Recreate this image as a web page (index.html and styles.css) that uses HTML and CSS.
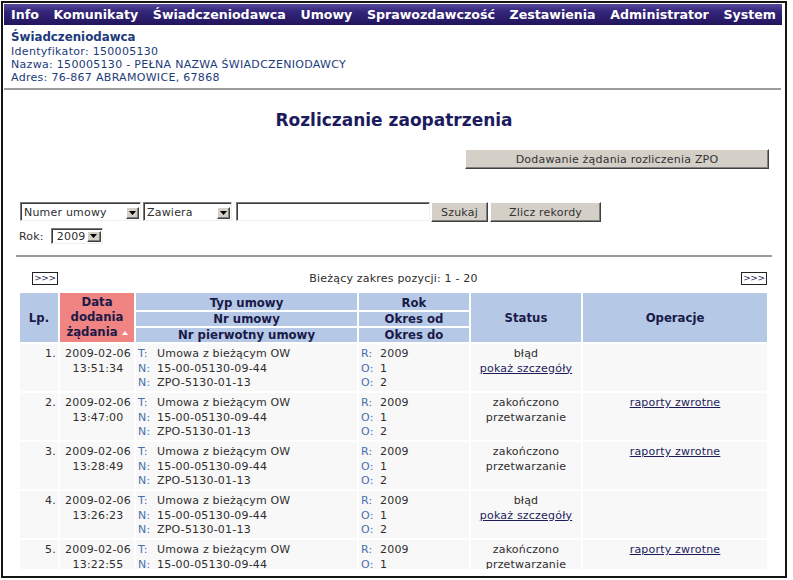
FILE: index.html
```html
<!DOCTYPE html>
<html lang="pl">
<head>
<meta charset="utf-8">
<title>Rozliczanie zaopatrzenia</title>
<link rel="stylesheet" href="styles.css">
</head>
<body>
<div class="frame">
  <div class="viewport">
    <nav class="menu">
      <span>Info</span>
      <span>Komunikaty</span>
      <span>Świadczeniodawca</span>
      <span>Umowy</span>
      <span>Sprawozdawczość</span>
      <span>Zestawienia</span>
      <span>Administrator</span>
      <span>System</span>
    </nav>
    <div class="provider">
      <div class="provider-title">Świadczeniodawca</div>
      <div>Identyfikator: 150005130</div>
      <div>Nazwa: 150005130 - PEŁNA NAZWA ŚWIADCZENIODAWCY</div>
      <div>Adres: 76-867 ABRAMOWICE, 67868</div>
    </div>
    <div class="rule"></div>
    <main class="content">
      <h1 class="title">Rozliczanie zaopatrzenia</h1>
      <div class="actions">
        <button class="btn btn-add">Dodawanie żądania rozliczenia ZPO</button>
      </div>
      <div class="search">
        <div class="select sel-field">
          <span class="sel-text">Numer umowy</span>
          <span class="sel-arrow"><svg width="7" height="4" viewBox="0 0 7 4"><path d="M0 0h7L3.5 4z" fill="#000"/></svg></span>
        </div>
        <div class="select sel-op">
          <span class="sel-text">Zawiera</span>
          <span class="sel-arrow"><svg width="7" height="4" viewBox="0 0 7 4"><path d="M0 0h7L3.5 4z" fill="#000"/></svg></span>
        </div>
        <input class="textbox" type="text" value="">
        <button class="btn btn-search">Szukaj</button>
        <button class="btn btn-count">Zlicz rekordy</button>
      </div>
      <div class="year">
        <span class="year-label">Rok:</span>
        <div class="select sel-year">
          <span class="sel-text">2009</span>
          <span class="sel-arrow"><svg width="7" height="4" viewBox="0 0 7 4"><path d="M0 0h7L3.5 4z" fill="#000"/></svg></span>
        </div>
      </div>
      <div class="rule2"></div>
      <div class="pager">
        <span class="next next-left">&gt;&gt;&gt;</span>
        <span class="range">Bieżący zakres pozycji: 1 - 20</span>
        <span class="next next-right">&gt;&gt;&gt;</span>
      </div>
      <table class="grid">
        <colgroup>
          <col class="c-lp"><col class="c-date"><col class="c-type"><col class="c-year"><col class="c-status"><col class="c-ops">
        </colgroup>
        <thead>
          <tr class="hr1">
            <th rowspan="3" class="mid">Lp.</th>
            <th rowspan="3" class="mid sorted"><div class="date-head">Data<br>dodania<br>żądania <svg class="sort" width="6" height="4" viewBox="0 0 6 4"><path d="M0 4h6L3 0z" fill="#fff"/></svg></div></th>
            <th class="bot">Typ umowy</th>
            <th class="bot">Rok</th>
            <th rowspan="3" class="mid">Status</th>
            <th rowspan="3" class="mid">Operacje</th>
          </tr>
          <tr class="hr2">
            <th>Nr umowy</th>
            <th>Okres od</th>
          </tr>
          <tr class="hr3">
            <th>Nr pierwotny umowy</th>
            <th>Okres do</th>
          </tr>
        </thead>
        <tbody>
          <tr class="row">
            <td class="lp">1.</td>
            <td class="date">2009-02-06<br>13:51:34</td>
            <td><span class="lbl">T:</span>Umowa z bieżącym OW<br><span class="lbl">N:</span>15-00-05130-09-44<br><span class="lbl">N:</span>ZPO-5130-01-13</td>
            <td><span class="lbl">R:</span>2009<br><span class="lbl">O:</span>1<br><span class="lbl">O:</span>2</td>
            <td class="center">błąd<br><a href="#" class="link">pokaż szczegóły</a></td>
            <td class="center"></td>
          </tr>
          <tr class="row">
            <td class="lp">2.</td>
            <td class="date">2009-02-06<br>13:47:00</td>
            <td><span class="lbl">T:</span>Umowa z bieżącym OW<br><span class="lbl">N:</span>15-00-05130-09-44<br><span class="lbl">N:</span>ZPO-5130-01-13</td>
            <td><span class="lbl">R:</span>2009<br><span class="lbl">O:</span>1<br><span class="lbl">O:</span>2</td>
            <td class="center">zakończono<br>przetwarzanie</td>
            <td class="center"><a href="#" class="link">raporty zwrotne</a></td>
          </tr>
          <tr class="row">
            <td class="lp">3.</td>
            <td class="date">2009-02-06<br>13:28:49</td>
            <td><span class="lbl">T:</span>Umowa z bieżącym OW<br><span class="lbl">N:</span>15-00-05130-09-44<br><span class="lbl">N:</span>ZPO-5130-01-13</td>
            <td><span class="lbl">R:</span>2009<br><span class="lbl">O:</span>1<br><span class="lbl">O:</span>2</td>
            <td class="center">zakończono<br>przetwarzanie</td>
            <td class="center"><a href="#" class="link">raporty zwrotne</a></td>
          </tr>
          <tr class="row">
            <td class="lp">4.</td>
            <td class="date">2009-02-06<br>13:26:23</td>
            <td><span class="lbl">T:</span>Umowa z bieżącym OW<br><span class="lbl">N:</span>15-00-05130-09-44<br><span class="lbl">N:</span>ZPO-5130-01-13</td>
            <td><span class="lbl">R:</span>2009<br><span class="lbl">O:</span>1<br><span class="lbl">O:</span>2</td>
            <td class="center">błąd<br><a href="#" class="link">pokaż szczegóły</a></td>
            <td class="center"></td>
          </tr>
          <tr class="row">
            <td class="lp">5.</td>
            <td class="date">2009-02-06<br>13:22:55</td>
            <td><span class="lbl">T:</span>Umowa z bieżącym OW<br><span class="lbl">N:</span>15-00-05130-09-44<br><span class="lbl">N:</span>ZPO-5130-01-13</td>
            <td><span class="lbl">R:</span>2009<br><span class="lbl">O:</span>1<br><span class="lbl">O:</span>2</td>
            <td class="center">zakończono<br>przetwarzanie</td>
            <td class="center"><a href="#" class="link">raporty zwrotne</a></td>
          </tr>
        </tbody>
      </table>
    </main>
  </div>
</div>
</body>
</html>
```

FILE: styles.css
```css
* { box-sizing: border-box; }
html, body { margin: 0; padding: 0; background: #fff; }
body {
  font-family: "DejaVu Sans", Verdana, sans-serif;
  font-size: 11px;
  color: #2e2e2e;
}

.frame {
  margin: 1px 0 0 1px;
  width: 786px;
  height: 577px;
  border: 2px solid #141414;
  padding: 1px 0 0 1px;
  background: #fff;
}
.viewport {
  width: 781px;
  height: 565px;
  overflow: hidden;
}

.menu {
  width: 778px;
  height: 21px;
  display: flex;
  justify-content: space-between;
  align-items: center;
  padding: 0 6px 0 7px;
  background: linear-gradient(to bottom, #564a9c 0%, #34267a 35%, #22155d 100%);
  color: #fff;
  font-weight: bold;
  font-size: 12.6px;
  line-height: 21px;
}

.provider {
  margin-top: 4px;
  padding-left: 7px;
  color: #1d3b7a;
  line-height: 13px;
  letter-spacing: 0.3px;
}
.provider-title {
  font-weight: bold;
  font-size: 11.8px;
  line-height: 16px;
  letter-spacing: 0;
}
.rule {
  margin-top: 4px;
  width: 777px;
  height: 2px;
  background: #9c9c9c;
}

.content {
  padding: 0 13px 0 12px;
}
.title {
  margin: 20px 0 0;
  font-size: 17px;
  line-height: 20px;
  text-align: center;
  color: #1b1b5e;
  font-weight: bold;
}

.btn {
  font-family: "DejaVu Sans", Verdana, sans-serif;
  font-size: 11px;
  letter-spacing: 0.2px;
  color: #333;
  background: #d4d0c8;
  border: 1px solid;
  border-color: #ffffff #404040 #404040 #ffffff;
  box-shadow: inset -1px -1px 0 #808080;
  height: 20px;
  padding: 0;
  margin: 0;
  line-height: 17px;
  text-align: center;
}

.actions {
  margin-top: 19px;
  display: flex;
  justify-content: flex-end;
  padding-right: 3px;
}
.btn-add { width: 304px; }

.search {
  margin-top: 33px;
  display: flex;
  align-items: flex-start;
  padding-left: 4px;
  height: 20px;
}
.select {
  display: flex;
  align-items: flex-end;
  background: #fff;
  border: 1px solid;
  border-color: #7b7b7b #f0f0f0 #f0f0f0 #7b7b7b;
  box-shadow: inset 1px 1px 0 #3c3c3c;
  letter-spacing: 0.2px;
}
.sel-field { width: 121px; height: 19px; margin-right: 2px; padding: 0 1px 1px 3px; }
.sel-op { width: 89px; height: 19px; margin-right: 4px; padding: 0 1px 1px 3px; }
.sel-text { flex: 1; line-height: 13px; white-space: nowrap; overflow: hidden; }
.sel-arrow {
  width: 13px;
  height: 12px;
  display: flex;
  align-items: center;
  justify-content: center;
  background: #d4d0c8;
  border: 1px solid;
  border-color: #ffffff #404040 #404040 #ffffff;
  box-shadow: inset -1px -1px 0 #808080;
}
.textbox {
  width: 194px;
  height: 19px;
  margin: 0 1px 0 0;
  padding: 0 2px;
  border: 1px solid;
  border-color: #7b7b7b #f0f0f0 #f0f0f0 #7b7b7b;
  box-shadow: inset 1px 1px 0 #3c3c3c;
  background: #fff;
  font-family: "DejaVu Sans", Verdana, sans-serif;
  font-size: 11px;
  outline: none;
}
.btn-search { width: 57px; margin-right: 2px; }
.btn-count { width: 111px; }

.year {
  margin-top: 6px;
  padding-left: 3px;
  display: flex;
  align-items: center;
  height: 16px;
}
.year-label { margin-right: 7px; letter-spacing: 0.2px; }
.sel-year {
  width: 52px;
  height: 16px;
  align-items: center;
  padding: 0 1px 0 5px;
}
.sel-year .sel-arrow { width: 14px; height: 11px; }

.rule2 {
  margin-top: 11px;
  height: 2px;
  background: #9c9c9c;
}

.pager {
  margin: 15px 5px 0 4px;
  height: 12px;
  display: grid;
  grid-template-columns: 1fr auto 1fr;
  align-items: center;
}
.range { line-height: 12px; letter-spacing: 0.2px; }
.next {
  width: 26px;
  height: 13px;
  border: 1px solid #222;
  font-size: 9px;
  line-height: 11px;
  text-align: center;
  color: #1c1c4c;
  letter-spacing: -0.3px;
}
.next-left { justify-self: start; margin-left: 12px; }
.next-right { justify-self: end; }

.grid {
  margin: 7px 0 0 2px;
  border-collapse: separate;
  border-spacing: 2px;
  width: 751px;
  table-layout: fixed;
}
.c-lp { width: 38px; }
.c-date { width: 74px; }
.c-type { width: 221px; }
.c-year { width: 110px; }
.c-status { width: 110px; }
.c-ops { width: 184px; }

.grid th {
  background: #b5c9e7;
  color: #1a1a48;
  font-size: 11.7px;
  font-weight: bold;
  padding: 0;
  line-height: 14px;
  text-align: center;
}
.grid th.mid { vertical-align: middle; }
.grid th.bot { vertical-align: bottom; }
.grid th.sorted { background: #f08482; }
.hr1 { height: 17px; }
.hr2 { height: 14px; }
.hr3 { height: 14px; }
.date-head { line-height: 15px; }
.sort { vertical-align: 1px; }

.grid td {
  background: #f8f8f8;
  vertical-align: top;
  padding: 3px 2px 0;
  line-height: 14.5px;
  letter-spacing: 0.2px;
  white-space: nowrap;
  overflow: hidden;
}
.row { height: 47px; }
.grid td.lp { text-align: right; padding-right: 2px; }
.grid td.date { text-align: center; padding-left: 4px; }
.grid td.center { text-align: center; }
.lbl { display: inline-block; width: 19px; color: #4a6fae; }
.link { color: #1c1c5c; text-decoration: underline; }
```
